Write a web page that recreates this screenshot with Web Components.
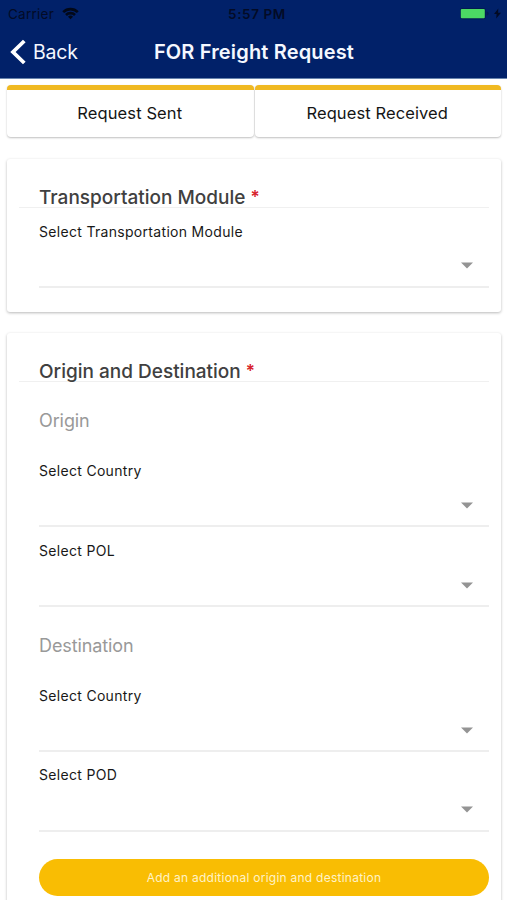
<!DOCTYPE html>
<html lang="en">
<head>
<meta charset="utf-8">
<title>FOR Freight Request</title>
<style>
  html, body { margin: 0; background: #fff; }
  body { width: 507px; height: 900px; overflow: hidden; font-family: Inter, "Liberation Sans", sans-serif; color: #1c1c1c; }
</style>
</head>
<body>
<freight-app></freight-app>
<script>
  const define = (name, html) => customElements.define(name, class extends HTMLElement {
    constructor() {
      super();
      const t = document.createElement('template');
      t.innerHTML = html;
      this.attachShadow({ mode: 'open' }).append(t.content.cloneNode(true));
    }
  });

  define('status-bar', `
    <style>
      :host { display: grid; grid-template-columns: 1fr auto 1fr; align-items: center; height: 27px; padding: 0 6px 0 8px; box-sizing: border-box; color: #030b26; }
      .left, .right { display: flex; align-items: center; }
      .left { gap: 8px; font-size: 13.5px; letter-spacing: .25px; }
      .time { padding-left: 5px; font-size: 13.5px; font-weight: 600; letter-spacing: .6px; }
      .right { justify-content: flex-end; gap: 5px; }
      svg { display: block; }
    </style>
    <div class="left"><span>Carrier</span>
      <svg width="17" height="13" viewBox="0 0 17 13" fill="none" stroke="#020818" stroke-width="2.6"><path d="M1.2 5.1a10.4 10.4 0 0 1 14.6 0M4 8a6.4 6.4 0 0 1 9 0"/><path d="M8.5 12.2 6 9.7a3.6 3.6 0 0 1 5 0z" fill="#020818" stroke="none"/></svg>
    </div>
    <span class="time">5:57 PM</span>
    <div class="right">
      <svg width="29" height="12" viewBox="0 0 29 12"><rect x=".2" y="0" width="25.6" height="11.2" rx="2.4" fill="#031a50"/><rect x=".8" y="1" width="24" height="9.2" rx="1" fill="#4cd964"/><path d="M26.6 3.6a2 2 0 0 1 0 4z" fill="#031a50"/></svg>
      <svg width="7" height="11" viewBox="0 0 7 11"><path d="M4.3.5 0 6h2.6L2.2 10.5 7 4.7H4.1z" fill="#020a24"/></svg>
    </div>`);

  define('nav-bar', `
    <style>
      :host { display: grid; grid-template-columns: 1fr auto 1fr; align-items: center; height: 50px; padding: 0 10px; color: #f5f8ff; }
      .back { display: flex; align-items: center; gap: 6px; font-size: 19.5px; letter-spacing: -.2px; }
      .title { padding-left: 1px; font-size: 20px; font-weight: 600; letter-spacing: .16px; }
      svg { display: block; }
    </style>
    <div class="back"><svg width="17" height="26" viewBox="0 0 17 26"><path d="M14.3 2 3 13l11.3 11" fill="none" stroke="#fff" stroke-width="3.8"/></svg><span>Back</span></div>
    <span class="title"><slot></slot></span>`);

  define('app-tab', `
    <style>
      :host { display: flex; flex: 1; align-items: center; justify-content: center; box-sizing: border-box; height: 52px; padding: 0 1px 1px 0; border-top: 5px solid #f0b921; border-radius: 4px; background: #fff; box-shadow: 0 1px 2px rgba(0,0,0,.25); font-size: 16.5px; letter-spacing: .1px; color: #151515; }
    </style>
    <span><slot></slot></span>`);

  define('form-card', `
    <style>
      :host { display: block; box-sizing: border-box; margin: 0 6px 0 7px; padding: 0 12px; border-radius: 3px; background: #fff; box-shadow: 0 1px 3px rgba(0,0,0,.28); }
      h2 { display: flex; gap: 5px; align-items: flex-end; height: 49px; margin: 0; padding: 0 0 0 20px; box-sizing: border-box; border-bottom: 1px solid #f0f0f0; font-size: 19px; line-height: 19px; font-weight: 500; color: #404040; }
      i { font-style: normal; font-size: 17px; font-weight: 600; color: #d8232e; }
      .body { padding-left: 20px; }
    </style>
    <h2><span><slot name="title"></slot></span><i>*</i></h2>
    <div class="body"><slot></slot></div>`);

  define('sub-heading', `
    <style>
      :host { display: block; box-sizing: border-box; height: 65.5px; padding-top: 27px; font-size: 18px; line-height: 24px; letter-spacing: -.1px; color: #999; }
    </style>
    <slot></slot>`);

  define('select-field', `
    <style>
      :host { display: flex; flex-direction: column; justify-content: space-between; box-sizing: border-box; height: 79.65px; padding-top: 13.5px; border-bottom: 2px solid #eee; font-size: 14px; line-height: 20px; font-weight: 400; letter-spacing: .31px; color: #181818; }
      svg { display: block; align-self: flex-end; margin: 0 16px 16.2px 0; }
    </style>
    <span><slot></slot></span>
    <svg width="12" height="7" viewBox="0 0 12 7"><path d="M0 .4h12L6 6.6z" fill="#949494"/></svg>`);

  define('pill-button', `
    <style>
      :host { display: block; margin-top: 27.4px; }
      button { display: block; width: 100%; height: 37px; padding: 0; border: 0; border-radius: 19px; background: #f9bd03; color: #fff3c8; font: 400 12px Inter, "Liberation Sans", sans-serif; letter-spacing: .25px; }
    </style>
    <button><slot></slot></button>`);

  define('freight-app', `
    <style>
      :host { display: block; width: 507px; height: 900px; overflow: hidden; }
      header { height: 79px; box-sizing: border-box; background: #012169; border-bottom: 1px solid #6884ad; }
      .tabs { display: flex; gap: 1px; padding: 6px 6px 0 7px; margin-bottom: 22px; }
      .first { height: 153px; margin-bottom: 21px; }
      .second { height: 640px; }
    </style>
    <header><status-bar></status-bar><nav-bar>FOR Freight Request</nav-bar></header>
    <div class="tabs"><app-tab>Request Sent</app-tab><app-tab>Request Received</app-tab></div>
    <form-card class="first">
      <span slot="title">Transportation Module</span>
      <select-field>Select Transportation Module</select-field>
    </form-card>
    <form-card class="second">
      <span slot="title">Origin and Destination</span>
      <sub-heading>Origin</sub-heading>
      <select-field>Select Country</select-field>
      <select-field>Select POL</select-field>
      <sub-heading>Destination</sub-heading>
      <select-field>Select Country</select-field>
      <select-field>Select POD</select-field>
      <pill-button>Add an additional origin and destination</pill-button>
    </form-card>`);
</script>
</body>
</html>
